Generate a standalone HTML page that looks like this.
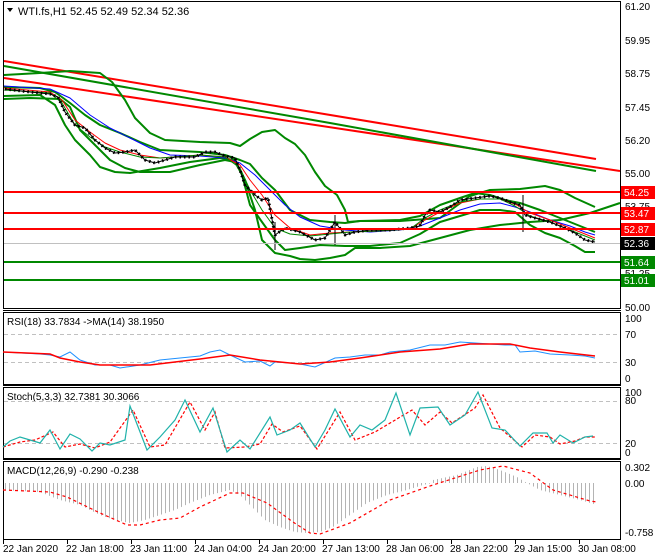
<!DOCTYPE html>
<html><head><meta charset="utf-8"><style>
html,body{margin:0;padding:0;background:#fff;width:660px;height:560px;overflow:hidden}
svg{display:block}
text{font-family:"Liberation Sans",sans-serif;font-size:10px;fill:#000}
</style></head><body>
<svg width="660" height="560" viewBox="0 0 660 560" xmlns="http://www.w3.org/2000/svg">
<defs>
<pattern id="hb" width="4" height="10" patternUnits="userSpaceOnUse"><rect x="1" y="0" width="1" height="10" fill="#b4b4b4"/></pattern>
</defs>
<rect width="660" height="560" fill="#fff"/>
<g fill="none" stroke="#000" stroke-width="1">
<rect x="3.5" y="1.5" width="617" height="307"/>
<rect x="3.5" y="312.5" width="617" height="72"/>
<rect x="3.5" y="387.5" width="617" height="71"/>
<rect x="3.5" y="461.5" width="617" height="78"/>
<line x1="3" y1="310.5" x2="621" y2="310.5"/>
<line x1="3" y1="385.5" x2="621" y2="385.5"/>
<line x1="3" y1="459.5" x2="621" y2="459.5"/>
</g>
<polygon points="7,8 13,8 10,12" fill="#000"/>
<text x="18" y="15" style="font-size:11px">WTI.fs,H1  52.45 52.49 52.34 52.36</text>

<g fill="none" stroke-linejoin="round">
<line x1="4" y1="61" x2="596" y2="159" stroke="#f00" stroke-width="2"/>
<line x1="4" y1="78" x2="620" y2="171" stroke="#f00" stroke-width="2"/>
<polyline stroke="#080" stroke-width="2" points="4,66 330,123 596,171"/>
<polyline stroke="#080" stroke-width="2" points="4,75 40,73 70,71 100,73 112,82 125,100 135,118 150,133 165,140 200,142 230,143 240,146 250,139 262,132 275,130 285,138 295,144 305,155 315,172 325,186 337,195 345,210 348,222 360,221 400,221 440,218 470,196 490,190 520,189 545,186 560,190 575,198 595,207"/>
<polyline stroke="#080" stroke-width="2" points="4,99 30,98 60,99 70,107 80,130 90,140 100,150 110,160 125,168 140,172 170,172 200,165 225,160 235,162 245,180 255,210 262,240 275,253 290,256 300,259 315,260 330,258 345,255 355,248 380,248 410,246 440,238 470,230 500,225 530,222 560,220 590,213 620,203"/>
<polyline stroke="#080" stroke-width="2" points="4,87 40,88 55,92 70,103 85,115 100,125 120,133 140,142 160,150 200,152 225,155 240,160 250,164 262,178 275,190 290,210 310,220 330,222 345,223 360,221 400,220 420,216 440,205 460,198 475,193 490,195 505,200 520,203 540,210 560,218 580,226 595,232"/>
<polyline stroke="#080" stroke-width="2" points="4,96 40,95 55,105 65,125 75,140 90,155 100,167 115,172 130,173 160,168 190,162 220,158 235,160 242,175 250,205 262,222 275,240 285,250 300,248 320,245 345,246 370,246 400,243 420,234 440,222 460,216 480,210 500,210 515,212 530,225 545,233 560,238 575,246 585,252 595,252"/>
<polyline stroke="#00f" stroke-width="1" points="4,86 50,89 70,98 90,115 110,128 130,138 150,148 170,155 200,156 225,158 240,163 255,175 270,190 285,205 300,217 320,226 345,230 370,232 400,230 420,226 440,218 460,210 480,204 500,203 515,207 530,212 550,220 570,226 585,232 595,235"/>
<polyline stroke="#f00" stroke-width="1" points="4,88 50,92 62,100 75,120 90,132 105,143 120,150 140,155 160,158 200,155 225,157 240,165 250,180 262,195 275,215 290,228 310,235 330,233 350,232 380,231 410,229 425,220 440,212 460,203 480,199 500,199 515,204 530,213 550,220 570,228 585,234 595,238"/>
<polyline stroke="#080" stroke-width="1" points="4,90 50,93 62,103 75,125 90,137 105,147 120,152 140,157 160,158 200,155 225,157 240,168 250,190 262,210 275,228 290,234 310,236 330,234 350,232 380,231 410,229 425,218 440,210 460,202 480,199 500,199 515,206 530,216 550,222 570,230 595,240"/>
<polyline stroke="#000" stroke-width="1" points="5,89 30,92 50,94 58,97 65,112 75,125 85,128 95,140 105,148 115,153 125,152 135,150 145,160 155,163 165,160 175,157 185,157 195,157 205,152 215,152 225,156 235,158 240,170 245,185 255,195 262,200 268,198 275,235 285,228 300,232 315,240 325,238 335,222 345,235 355,232 370,230 390,230 410,228 420,226 425,215 430,210 440,212 450,207 460,200 475,198 490,196 500,198 510,202 520,205 525,215 535,218 550,222 565,228 575,233 585,240 595,242"/>
<polyline stroke="#000" stroke-width="3" stroke-dasharray="1.5 3" points="5,89 30,92 50,94 58,97 65,112 75,125 85,128 95,140 105,148 115,153 125,152 135,150 145,160 155,163 165,160 175,157 185,157 195,157 205,152 215,152 225,156 235,158 240,170 245,185 255,195 262,200 268,198 275,235 285,228 300,232 315,240 325,238 335,222 345,235 355,232 370,230 390,230 410,228 420,226 425,215 430,210 440,212 450,207 460,200 475,198 490,196 500,198 510,202 520,205 525,215 535,218 550,222 565,228 575,233 585,240 595,242"/>
<line x1="275" y1="222" x2="275" y2="250" stroke="#000"/>
<line x1="335" y1="215" x2="335" y2="245" stroke="#000"/>
<line x1="523" y1="195" x2="523" y2="232" stroke="#000"/>
</g>
<line x1="4" y1="243.5" x2="620" y2="243.5" stroke="#c0c0c0"/>
<g stroke-width="2">
<line x1="4" y1="192" x2="620" y2="192" stroke="#f00"/>
<line x1="4" y1="213" x2="620" y2="213" stroke="#f00"/>
<line x1="4" y1="229" x2="620" y2="229" stroke="#f00"/>
<line x1="4" y1="262" x2="620" y2="262" stroke="#080"/>
<line x1="4" y1="280" x2="620" y2="280" stroke="#080"/>
</g>
<g>
<text x="625" y="10">61.20</text>
<text x="625" y="44">59.95</text>
<text x="625" y="77">58.75</text>
<text x="625" y="111">57.45</text>
<text x="625" y="144">56.20</text>
<text x="625" y="177">55.00</text>
<text x="625" y="210">53.75</text>
<text x="625" y="277">51.25</text>
<text x="625" y="311">50.00</text>
</g>
<g>
<rect x="621" y="186" width="34" height="13" fill="#f00"/><text x="624" y="196" style="fill:#fff">54.25</text>
<rect x="621" y="207" width="34" height="13" fill="#f00"/><text x="624" y="217" style="fill:#fff">53.47</text>
<rect x="621" y="223" width="34" height="13" fill="#f00"/><text x="624" y="233" style="fill:#fff">52.87</text>
<rect x="621" y="237" width="34" height="13" fill="#000"/><text x="624" y="247" style="fill:#fff">52.36</text>
<rect x="621" y="256" width="34" height="13" fill="#080"/><text x="624" y="266" style="fill:#fff">51.64</text>
<rect x="621" y="274" width="34" height="13" fill="#080"/><text x="624" y="284" style="fill:#fff">51.01</text>
</g>

<text x="7" y="325">RSI(18) 33.7834  -&gt;MA(14) 38.1950</text>
<g stroke="#c0c0c0" stroke-dasharray="4 3"><line x1="4" y1="334.5" x2="620" y2="334.5"/><line x1="4" y1="362.5" x2="620" y2="362.5"/></g>
<polyline fill="none" stroke="#1e90ff" stroke-width="1" points="3,352 40,354 50,355 60,357 70,352 80,360 95,365 110,365 120,368 140,365 160,360 180,358 200,356 210,352 220,350 230,355 245,362 260,361 270,366 275,362 290,363 300,364 315,367 335,358 350,357 365,355 380,355 390,352 410,350 430,345 445,345 460,342 475,343 490,344 505,345 515,345 520,352 535,351 550,354 570,355 585,356 595,358"/>
<polyline fill="none" stroke="#f00" stroke-width="1.5" points="3,352 50,354 60,358 80,362 100,365 150,365 200,359 230,355 260,360 300,364 330,362 360,358 400,352 440,349 470,344 510,344 530,348 560,352 595,356"/>
<text x="625" y="322">100</text><text x="625" y="338">70</text><text x="625" y="366">30</text><text x="625" y="382">0</text>

<text x="7" y="400">Stoch(5,3,3) 32.7381 30.3066</text>
<g stroke="#c0c0c0" stroke-dasharray="4 3"><line x1="4" y1="401.5" x2="620" y2="401.5"/><line x1="4" y1="443.5" x2="620" y2="443.5"/></g>
<polyline fill="none" stroke="#f00" stroke-width="1.2" stroke-dasharray="3 2" points="3,447 20,442 35,440 53,432 65,447 80,444 95,448 110,442 133,410 150,447 165,445 190,402 205,430 215,412 225,448 245,447 260,444 272,424 283,432 300,426 317,449 340,412 355,440 375,432 412,410 425,425 440,412 452,423 475,408 483,395 500,428 522,447 535,435 550,437 560,444 575,441 585,437 595,437"/>
<polyline fill="none" stroke="#20b2aa" stroke-width="1.2" points="3,447 10,441 20,437 30,440 40,443 50,430 60,449 70,434 80,439 92,451 100,443 110,445 125,440 130,406 147,450 160,437 175,420 185,400 200,432 213,408 227,452 240,440 250,449 270,417 277,435 290,430 300,423 315,447 325,430 335,409 350,437 360,425 372,430 385,420 396,393 410,435 420,408 438,407 450,425 465,415 478,392 492,428 505,430 520,446 533,433 547,433 553,443 560,435 573,443 585,437 593,436"/>
<text x="625" y="396">100</text><text x="625" y="404">80</text><text x="625" y="447">20</text><text x="625" y="456">0</text>

<text x="7" y="474">MACD(12,26,9) -0.290 -0.238</text>
<polygon fill="url(#hb)" points="3,483 3,490 40,492 60,500 80,505 100,515 115,520 130,523 145,520 160,515 175,510 190,503 210,495 230,490 240,495 250,505 265,520 280,527 295,532 307,533 320,532 333,527 353,513 367,503 387,495 407,490 423,485 433,483 433,480 457,475 477,467 487,466 500,470 517,477 527,483 540,490 560,495 580,500 597,505 597,483"/>
<polyline fill="none" stroke="#f00" stroke-width="1.2" stroke-dasharray="3 3" points="3,490 50,492 67,497 100,513 127,525 140,525 160,520 180,518 200,507 230,493 243,493 267,503 293,522 310,533 320,534 350,523 390,500 433,485 480,470 503,466 530,473 553,490 590,501 597,502"/>
<text x="625" y="471">0.302</text><text x="625" y="487">0.00</text><text x="625" y="536">-0.758</text>

<g stroke="#000"><line x1="3.5" y1="540" x2="3.5" y2="544"/><line x1="67.5" y1="540" x2="67.5" y2="544"/><line x1="131.5" y1="540" x2="131.5" y2="544"/><line x1="195.5" y1="540" x2="195.5" y2="544"/><line x1="259.5" y1="540" x2="259.5" y2="544"/><line x1="323.5" y1="540" x2="323.5" y2="544"/><line x1="387.5" y1="540" x2="387.5" y2="544"/><line x1="451.5" y1="540" x2="451.5" y2="544"/><line x1="515.5" y1="540" x2="515.5" y2="544"/><line x1="579.5" y1="540" x2="579.5" y2="544"/></g>
<text x="3" y="552">22 Jan 2020</text>
<text x="66" y="552">22 Jan 18:00</text>
<text x="130" y="552">23 Jan 11:00</text>
<text x="194" y="552">24 Jan 04:00</text>
<text x="258" y="552">24 Jan 20:00</text>
<text x="322" y="552">27 Jan 13:00</text>
<text x="386" y="552">28 Jan 06:00</text>
<text x="450" y="552">28 Jan 22:00</text>
<text x="514" y="552">29 Jan 15:00</text>
<text x="578" y="552">30 Jan 08:00</text>
</svg>
</body></html>
